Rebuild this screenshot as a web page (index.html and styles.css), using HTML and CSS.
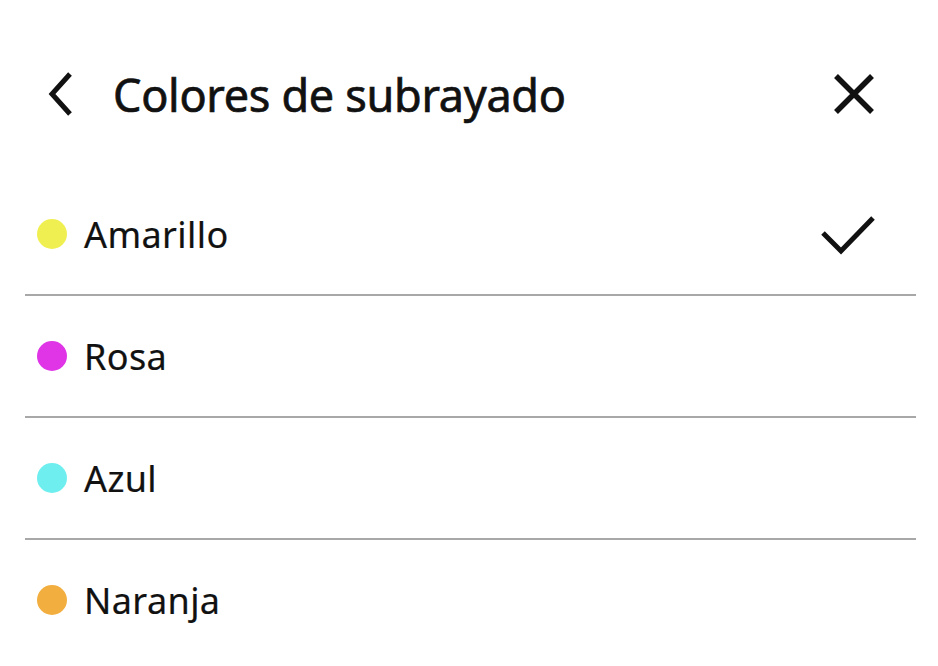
FILE: index.html
```html
<!DOCTYPE html>
<html lang="es">
<head>
<meta charset="utf-8">
<title>Colores de subrayado</title>
<link rel="stylesheet" href="styles.css">
</head>
<body>
<div class="panel">
  <header class="header">
    <button class="icon-btn back" aria-label="Atrás">
      <svg width="26" height="44" viewBox="0 0 26 44"><path d="M23 2 L5 22 L23 42" fill="none" stroke="#111" stroke-width="5"/></svg>
    </button>
    <h1 class="title">Colores de subrayado</h1>
    <button class="icon-btn close" aria-label="Cerrar">
      <svg width="44" height="44" viewBox="0 0 44 44"><path d="M4 4 L40 40 M40 4 L4 40" fill="none" stroke="#111" stroke-width="5.5"/></svg>
    </button>
  </header>
  <ul class="list">
    <li class="row"><span class="dot yellow"></span><span class="label">Amarillo</span>
      <svg class="check" width="56" height="42" viewBox="0 0 56 42"><path d="M3 20 L21 38 L53 5" fill="none" stroke="#111" stroke-width="5"/></svg>
    </li>
    <li class="row"><span class="dot pink"></span><span class="label">Rosa</span></li>
    <li class="row"><span class="dot cyan"></span><span class="label">Azul</span></li>
    <li class="row last"><span class="dot orange"></span><span class="label">Naranja</span></li>
  </ul>
</div>
</body>
</html>
```
FILE: styles.css
```css
html, body {
  margin: 0;
  padding: 0;
  background: #fff;
}
body {
  font-family: "Noto Sans", "Open Sans", sans-serif;
  color: #111;
}
.panel {
  width: 938px;
}
.header {
  display: flex;
  align-items: center;
  height: 120px;
  margin-top: 34px;
  padding: 0 62px 0 47px;
  margin-bottom: 20px;
}
.icon-btn {
  border: 0;
  background: none;
  padding: 0;
  display: flex;
}
.title {
  flex: 1;
  margin: 0 0 0 40px;
  font-size: 45px;
  font-weight: 400;
  letter-spacing: -0.3px;
  -webkit-text-stroke: 0.7px #111;
}
.list {
  list-style: none;
  margin: 0 22px 0 25px;
  padding: 0;
}
.row {
  display: flex;
  align-items: center;
  height: 120px;
  border-bottom: 2px solid #a8a8a8;
  padding: 0 40px 0 12px;
}
.row.last {
  border-bottom: 0;
}
.dot {
  width: 30px;
  height: 30px;
  border-radius: 50%;
  margin-right: 17px;
  flex: none;
}
.yellow { background: #f0ef52; }
.pink { background: #df35e6; }
.cyan { background: #6eeeee; }
.orange { background: #f2ae3f; }
.label {
  flex: 1;
  font-size: 36px;
  letter-spacing: 0.4px;
  -webkit-text-stroke: 0.2px #111;
}
.check {
  flex: none;
}
```
